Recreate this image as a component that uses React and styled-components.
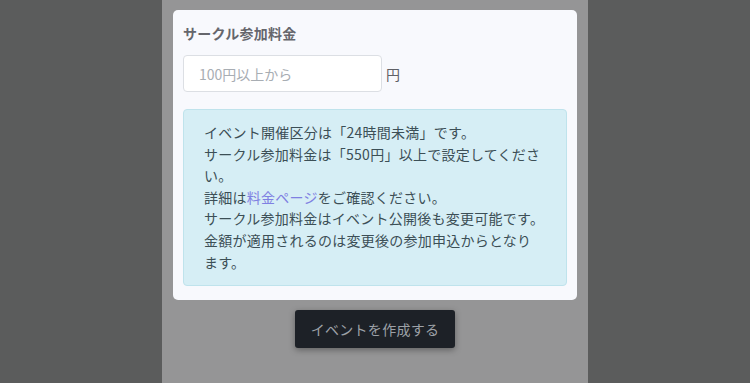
import styled, { createGlobalStyle } from "styled-components";

const GlobalStyle = createGlobalStyle`
  html, body {
    margin: 0;
    padding: 0;
    background: #5b5c5c;
  }
  body {
    font-family: "Noto Sans CJK JP", "Noto Sans", sans-serif;
  }
`;

// style
const Page = styled.div`
  display: flex;
  justify-content: center;
  min-height: 383px;
  background: #5b5c5c;
`;

const Column = styled.div`
  width: 426px;
  background: #959596;
  padding: 10px 10px 0;
  box-sizing: border-box;
  display: flex;
  flex-direction: column;
  align-items: center;
`;

const Card = styled.section`
  width: 404px;
  box-sizing: border-box;
  background: #f8f9fd;
  border-radius: 5px;
  padding: 13px 10px 14px 10px;
`;

const Title = styled.h3`
  margin: 0;
  font-size: 14px;
  font-weight: 700;
  line-height: 20px;
  letter-spacing: 0.25px;
  color: #65666c;
`;

const InputRow = styled.div`
  display: flex;
  align-items: center;
  gap: 4px;
  margin-top: 12px;
`;

const Input = styled.input`
  width: 199px;
  height: 37px;
  box-sizing: border-box;
  border: 1px solid #dcdfe4;
  border-radius: 4px;
  background: #fff;
  padding: 0 15px;
  font-family: inherit;
  font-size: 14px;
  color: #495057;
  outline: none;
  &::placeholder {
    color: #a8adb3;
  }
`;

const Unit = styled.span`
  font-size: 14px;
  color: #5f6066;
`;

const InfoBox = styled.div`
  margin-top: 17px;
  width: 384px;
  box-sizing: border-box;
  background: #d6eef5;
  border: 1px solid #bfe3ec;
  border-radius: 4px;
  padding: 12px 16px 12px 20px;
  font-size: 14px;
  line-height: 21.6px;
  letter-spacing: 0.25px;
  color: #3c4f56;
`;

const Line = styled.p`
  margin: 0;
`;

const Link = styled.a`
  color: #7f80e2;
  text-decoration: none;
`;

const CreateButton = styled.button`
  margin-top: 10px;
  height: 38px;
  padding: 0 16px;
  border: none;
  border-radius: 3px;
  background: #1d2127;
  color: #9da1a7;
  font-family: inherit;
  font-size: 14px;
  letter-spacing: 0.3px;
  box-shadow: 0 2px 6px rgba(0, 0, 0, 0.35);
`;

function App() {
  return (
    <Page>
      <GlobalStyle />
      <Column>
        <Card>
          <Title>サークル参加料金</Title>
          <InputRow>
            <Input placeholder="100円以上から" />
            <Unit>円</Unit>
          </InputRow>
          {/* notice */}
          <InfoBox>
            <Line>イベント開催区分は「24時間未満」です。</Line>
            <Line>サークル参加料金は「550円」以上で設定してください。</Line>
            <Line>
              詳細は<Link href="#">料金ページ</Link>をご確認ください。
            </Line>
            <Line>サークル参加料金はイベント公開後も変更可能です。</Line>
            <Line>
              金額が適用されるのは変更後の参加申込からとなり
              <br />
              ます。
            </Line>
          </InfoBox>
        </Card>
        <CreateButton>イベントを作成する</CreateButton>
      </Column>
    </Page>
  );
}

export default App;
